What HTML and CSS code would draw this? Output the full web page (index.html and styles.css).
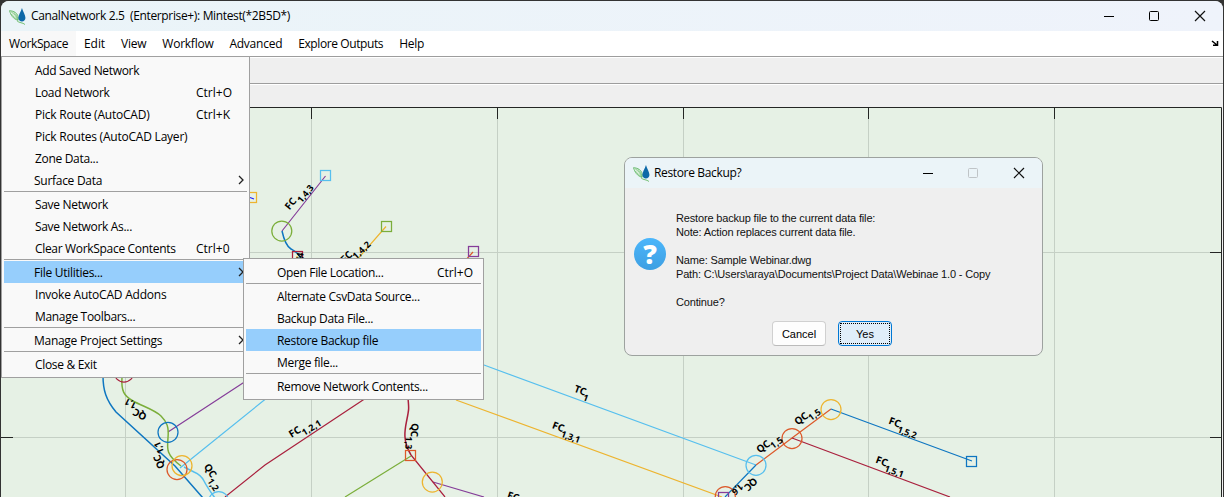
FILE: index.html
```html
<!DOCTYPE html>
<html lang="en">
<head>
<meta charset="utf-8">
<title>CanalNetwork 2.5</title>
<link rel="stylesheet" href="styles.css">
</head>
<body>
<svg width="0" height="0" class="defs">
  <symbol id="logo" viewBox="0 0 16 16">
    <path d="M.5 2.500C1.500 6.500 4 10.500 8.500 11.500C9.500 7 7 3 .5 2.500Z" fill="#e4f4e4" stroke="#5cb562" stroke-width=".8"/>
    <path d="M2 3.500C5 5.500 7 8 8.500 11.500M4 3.500C6.500 5.500 7.500 8 8.300 10M2 5.500C4 8 6 9.500 8 11" fill="none" stroke="#5cb562" stroke-width=".6"/>
    <path d="M12.200 0C13.200 3.500 15.500 6.500 15.500 9.500A3.400 3.800 0 0 1 8.800 9.500C8.800 6.500 11.200 3.500 12.200 0Z" fill="#0d69a8"/>
    <path d="M7.500 12C9.500 14.300 13 13.500 15 15.500" fill="none" stroke="#69bb68" stroke-width=".9"/>
  </symbol>
  <symbol id="chevron" viewBox="0 0 6 10"><path d="M1 1L5 5L1 9" fill="none" stroke="#222" stroke-width="1.300"/></symbol>
  <symbol id="cross" viewBox="0 0 12 12"><path d="M1 1L11 11M11 1L1 11" fill="none" stroke="#111" stroke-width="1.200"/></symbol>
</svg>
<div class="window">
  <header class="titlebar">
    <svg class="logo"><use href="#logo"/></svg>
    <span class="title">CanalNetwork 2.5&nbsp; (Enterprise+): Mintest(*2B5D*)</span>
    <div class="controls">
      <svg width="12" height="12"><path d="M1 6.500H11" stroke="#000"/></svg>
      <svg width="12" height="12"><rect x="1.500" y="1.500" width="9" height="9" rx="1" fill="none" stroke="#000"/></svg>
      <svg width="12" height="12"><use href="#cross"/></svg>
    </div>
  </header>
  <nav class="menubar">
    <span class="top open">WorkSpace</span><span class="top short">Edit</span><span class="top">View</span><span class="top">Workflow</span><span class="top">Advanced</span><span class="top long">Explore Outputs</span><span class="top">Help</span>
    <svg class="dock" width="8" height="6"><path d="M1 1L6 5M6.500 1V5.300H2" fill="none" stroke="#000" stroke-width="1.500"/></svg>
  </nav>
  <div class="toolbar upper"></div>
  <div class="toolbar lower"></div>
  <svg class="plot" width="1222" height="390" viewBox="1 107 1222 390">
    <rect x="1" y="107" width="1222" height="390" fill="#e6f1e5"/>
    <path class="grid" d="M125.500 108V497M311.500 108V497M497.500 108V497M683.500 108V497M868.500 108V497M1054.500 108V497M1 252.500H1221M1 437.500H1221"/>
    <path class="axis" d="M1 107.500H1221.500V497M125.500 107V119M311.500 107V119M497.500 107V119M683.500 107V119M868.500 107V119M1054.500 107V119M1 252.500H13M1 437.500H13M1210 252.500H1221M1210 437.500H1221"/>
    <path d="M1222.500 107V497" stroke="#f2f2f2"/>
    <g class="lines">
      <path class="violet" d="M282 231L325.500 176M168 432L246 381M433 482L484 497"/>
      <path class="amber" d="M386 226.500L355 262M456 400L722 497"/>
      <path class="orange" d="M473 252L464 262M756 465L792 438L831 409"/>
      <path class="sky" d="M180 468L268 397M484 365L756 465"/>
      <path class="maroon" d="M225 497L265 465L366 398M411 455L445 497M792 438L950 497"/>
      <path class="green" d="M411 456L345 497"/>
      <path class="blue" d="M831 409L972 461M756 465L725 497"/>
      <path class="blue thick" d="M282 231C284 240 286 246 291 249S300 254 302 262M103 376C103 390 106 400 116 412L175 466L203 498"/>
      <path class="green thick" d="M122 377C121 391 124 396 133 401S155 410 161 416S169 427 168 438S166 455 181 466"/>
      <path class="sky thick" d="M184 467L194 472Q201 475 204 481T215 498"/>
      <path class="maroon thick" d="M408 398C409 409 409 409 407 419S402 440 411 455"/>
      <path d="M250 197.500L254 199" stroke="#22f" stroke-width="2"/>
      <path class="amber" d="M297 256v6"/>
    </g>
    <g class="nodes">
      <circle class="green" cx="281.800" cy="231" r="10"/><circle class="maroon" cx="124" cy="372" r="10"/>
      <circle class="blue" cx="168" cy="432.300" r="10"/><circle class="orange" cx="177" cy="469.500" r="10"/>
      <circle class="amber" cx="182" cy="465.700" r="10"/><circle class="sky" cx="218.700" cy="501.500" r="10"/>
      <circle class="amber" cx="432.300" cy="482" r="10"/><circle class="amber" cx="831" cy="409.500" r="10"/>
      <circle class="orange" cx="792" cy="438.500" r="10"/><circle class="sky" cx="756" cy="465.300" r="10"/>
      <circle class="orange" cx="725.300" cy="496.500" r="10"/>
      <rect class="sky" x="320.500" y="170.500" width="10" height="10"/><rect class="amber" x="246.500" y="192.500" width="10" height="10"/>
      <rect class="green" x="381.500" y="221.500" width="10" height="10"/><rect class="violet" x="468.500" y="246.500" width="10" height="10"/>
      <rect class="maroon" x="292.500" y="251.500" width="10" height="10"/><rect class="orange" x="405.500" y="450.500" width="10" height="10"/>
      <rect class="blue" x="966.500" y="456.500" width="10" height="10"/><rect class="violet" x="718.500" y="492.500" width="10" height="10"/>
    </g>
    <g class="labels">
      <g transform="translate(289.500 210.500) rotate(-51)"><text textLength="12">FC</text><text class="sub" x="13" y="5" textLength="20">1,4,3</text></g>
      <g transform="translate(344.500 263.500) rotate(-43)"><text textLength="12">FC</text><text class="sub" x="11" y="5" textLength="21">1,4,2</text></g>
      <g transform="translate(302 262) rotate(-80)"><text class="sub" textLength="9">1,4</text></g>
      <g transform="translate(147.500 414.500) rotate(207)"><text textLength="14">QC</text><text class="sub" x="14" y="5" textLength="12">1,1</text></g>
      <g transform="translate(165 467) rotate(247)"><text textLength="14">QC</text><text class="sub" x="14" y="5" textLength="12">1,1</text></g>
      <g transform="translate(203.500 466.500) rotate(57)"><text textLength="14">QC</text><text class="sub" x="14" y="5" textLength="13">1,2</text></g>
      <g transform="translate(291.500 438) rotate(-32)"><text textLength="12">FC</text><text class="sub" x="12" y="5" textLength="21">1,2,1</text></g>
      <g transform="translate(411.500 423) rotate(93)"><text textLength="14">QC</text><text class="sub" x="13.500" y="5" textLength="13">1,3</text></g>
      <g transform="translate(573.500 391.500) rotate(20)"><text textLength="12">TC</text><text class="sub" x="11" y="5">1</text></g>
      <g transform="translate(551.500 428) rotate(20)"><text textLength="12">FC</text><text class="sub" x="11" y="5" textLength="20">1,3,1</text></g>
      <g transform="translate(506.500 498) rotate(18)"><text textLength="12">FC</text></g>
      <g transform="translate(797.500 425.500) rotate(-36)"><text textLength="14">QC</text><text class="sub" x="13.500" y="4.500" textLength="13">1,5</text></g>
      <g transform="translate(759.500 453.500) rotate(-36)"><text textLength="14">QC</text><text class="sub" x="13.500" y="4.500" textLength="13">1,5</text></g>
      <g transform="translate(753.500 477) rotate(137)"><text textLength="14">QC</text><text class="sub" x="14" y="5" textLength="12">1,6</text></g>
      <g transform="translate(888 423.500) rotate(20)"><text textLength="12">FC</text><text class="sub" x="11" y="5" textLength="20">1,5,2</text></g>
      <g transform="translate(875 462.500) rotate(20)"><text textLength="12">FC</text><text class="sub" x="11" y="5" textLength="20">1,5,1</text></g>
    </g>
  </svg>
</div>

<div class="menu main">
  <div class="item">Add Saved Network</div>
  <div class="item">Load Network<span class="key">Ctrl+O</span></div>
  <div class="item wide">Pick Route (AutoCAD)<span class="key">Ctrl+K</span></div>
  <div class="item wide">Pick Routes (AutoCAD Layer)</div>
  <div class="item">Zone Data...</div>
  <div class="item parent">Surface Data<svg class="chevron"><use href="#chevron"/></svg></div>
  <div class="sep"></div>
  <div class="item">Save Network</div>
  <div class="item">Save Network As...</div>
  <div class="item">Clear WorkSpace Contents<span class="key">Ctrl+0</span></div>
  <div class="sep"></div>
  <div class="item parent active">File Utilities...<svg class="chevron"><use href="#chevron"/></svg></div>
  <div class="item wide">Invoke AutoCAD Addons</div>
  <div class="item">Manage Toolbars...</div>
  <div class="sep"></div>
  <div class="item parent">Manage Project Settings<svg class="chevron"><use href="#chevron"/></svg></div>
  <div class="sep"></div>
  <div class="item">Close &amp; Exit</div>
</div>
<div class="menu flyout">
  <div class="item">Open File Location...<span class="key">Ctrl+O</span></div>
  <div class="sep"></div>
  <div class="item">Alternate CsvData Source...</div>
  <div class="item">Backup Data File...</div>
  <div class="item active">Restore Backup file</div>
  <div class="item">Merge file...</div>
  <div class="sep"></div>
  <div class="item">Remove Network Contents...</div>
</div>

<section class="dialog">
  <header class="dialog-title">
    <svg class="logo"><use href="#logo"/></svg>
    <span class="title">Restore Backup?</span>
    <div class="controls">
      <svg width="12" height="12"><path d="M1 6.500H11" stroke="#000"/></svg>
      <svg width="12" height="12"><rect x="1.500" y="1.500" width="9" height="9" rx="1" fill="none" stroke="#bfc4c7"/></svg>
      <svg width="12" height="12"><use href="#cross"/></svg>
    </div>
  </header>
  <div class="dialog-body">
    <div class="question">?</div>
    <div class="message">Restore backup file to the current data file:<br>Note: Action replaces current data file.<br><br>Name: Sample Webinar.dwg<br>Path: C:\Users\araya\Documents\Project Data\Webinae 1.0 - Copy<br><br>Continue?</div>
  </div>
  <div class="buttons">
    <div class="button">Cancel</div>
    <div class="button primary"><span>Yes</span></div>
  </div>
</section>
</body>
</html>
```
FILE: styles.css
```css
* { box-sizing: border-box; }
body { margin: 0; width: 1224px; height: 497px; overflow: hidden; background: #333; position: relative; font: 12px/22px "Open Sans", "Noto Sans", sans-serif; color: #000; }
svg { display: block; flex: none; }
.defs { position: absolute; }
.window { margin: 1px 1px 0; height: 496px; border-radius: 8px 8px 0 0; overflow: hidden; background: #f0f0f0; }
.titlebar { height: 30px; display: flex; align-items: center; padding-left: 8px; background: linear-gradient(90deg, #eaf4f8, #eff3fb); }
.logo { width: 17px; height: 17px; }
.title { margin-left: 5px; white-space: nowrap; letter-spacing: -.35px; }
.controls { display: flex; gap: 34px; margin-left: auto; }
.titlebar .controls { padding-right: 17px; }
.titlebar .controls svg:first-child, .dialog-title .controls svg:first-child { margin-right: -1px; }
.menubar { height: 25px; display: flex; background: #fff; }
.top { padding: 0 8px; line-height: 25px; white-space: nowrap; letter-spacing: -.25px; }
.top.open { background: #f8f8f8; letter-spacing: -.4px; }
.top.short { letter-spacing: -.05px; }
.top.long { letter-spacing: -.4px; }
.dock { margin: 9px 4px 0 auto; }
.toolbar { border-top: 1px solid #9d9d9d; background: #efefef; box-shadow: inset 0 1px #fff; }
.upper { height: 27px; }
.lower { height: 24px; }

.grid { stroke: #c5d0c5; }
.axis { stroke: #242624; fill: none; }
.lines path, .nodes > * { fill: none; }
.lines path { stroke-width: 1.200; }
.lines .thick { stroke-width: 1.500; }
.nodes > * { stroke-width: 1.250; }
.blue { stroke: #0e76c1; }
.orange { stroke: #dc592a; }
.amber { stroke: #edb42f; }
.violet { stroke: #853d99; }
.green { stroke: #7bae3a; }
.sky { stroke: #56bfee; }
.maroon { stroke: #a9203d; }
.labels { font: 700 10px "Open Sans", sans-serif; fill: #000; }
.labels .sub { font-size: 9px; }

.menu { position: absolute; background: #f9f9f9; border: 1px solid #a0a0a0; padding: 2px; }
.main { left: 1px; top: 56px; width: 249px; height: 322px; }
.flyout { left: 243px; top: 258px; width: 241px; height: 142px; }
.item { display: flex; height: 22px; padding-left: 31px; line-height: 24px; white-space: nowrap; letter-spacing: -.32px; }
.item.wide { letter-spacing: -.22px; }
.item.parent { padding-left: 30px; letter-spacing: -.28px; }
.item.active { background: #96cefc; }
.key { margin-left: auto; width: 51px; letter-spacing: 0; }
.flyout .key { width: 44px; }
.sep { height: 2px; border-top: 1px solid #a0a0a0; }
.chevron { width: 6px; height: 10px; margin: 6px 3px 0 auto; }

.dialog { position: absolute; left: 624px; top: 157px; width: 419px; height: 199px; border: 1px solid #9da29f; border-radius: 8px; overflow: hidden; background: #efefef; }
.dialog-title { height: 30px; display: flex; align-items: center; padding: 0 17px 0 8px; background: #ebf4f8; }
.dialog-title .title { margin-left: 4px; }
.dialog-body { display: flex; padding: 23px 0 0 9px; height: 133px; }
.question { width: 32px; height: 32px; margin-top: 27px; border-radius: 50%; background: linear-gradient(#4bb6fb, #3e9fe2); color: #fff; text-align: center; font: 800 27px/32px "Open Sans", sans-serif; }
.message { margin-left: 10px; font: 11px/14px "Liberation Sans", Arial, sans-serif; letter-spacing: -.165px; white-space: nowrap; color: #111; }
.buttons { display: flex; gap: 12px; padding-left: 147px; }
.button { width: 54px; height: 25px; border: 1px solid #d0d0d0; border-bottom-color: #bbb; border-radius: 4px; background: #fdfdfd; font: 11px/25px "Liberation Sans", Arial, sans-serif; text-align: center; }
.primary { border: 1px solid #0078d4; background: #e0eef9; padding: 1px; line-height: 21px; }
.primary span { display: block; height: 21px; border: 1px dotted #000; }
```
